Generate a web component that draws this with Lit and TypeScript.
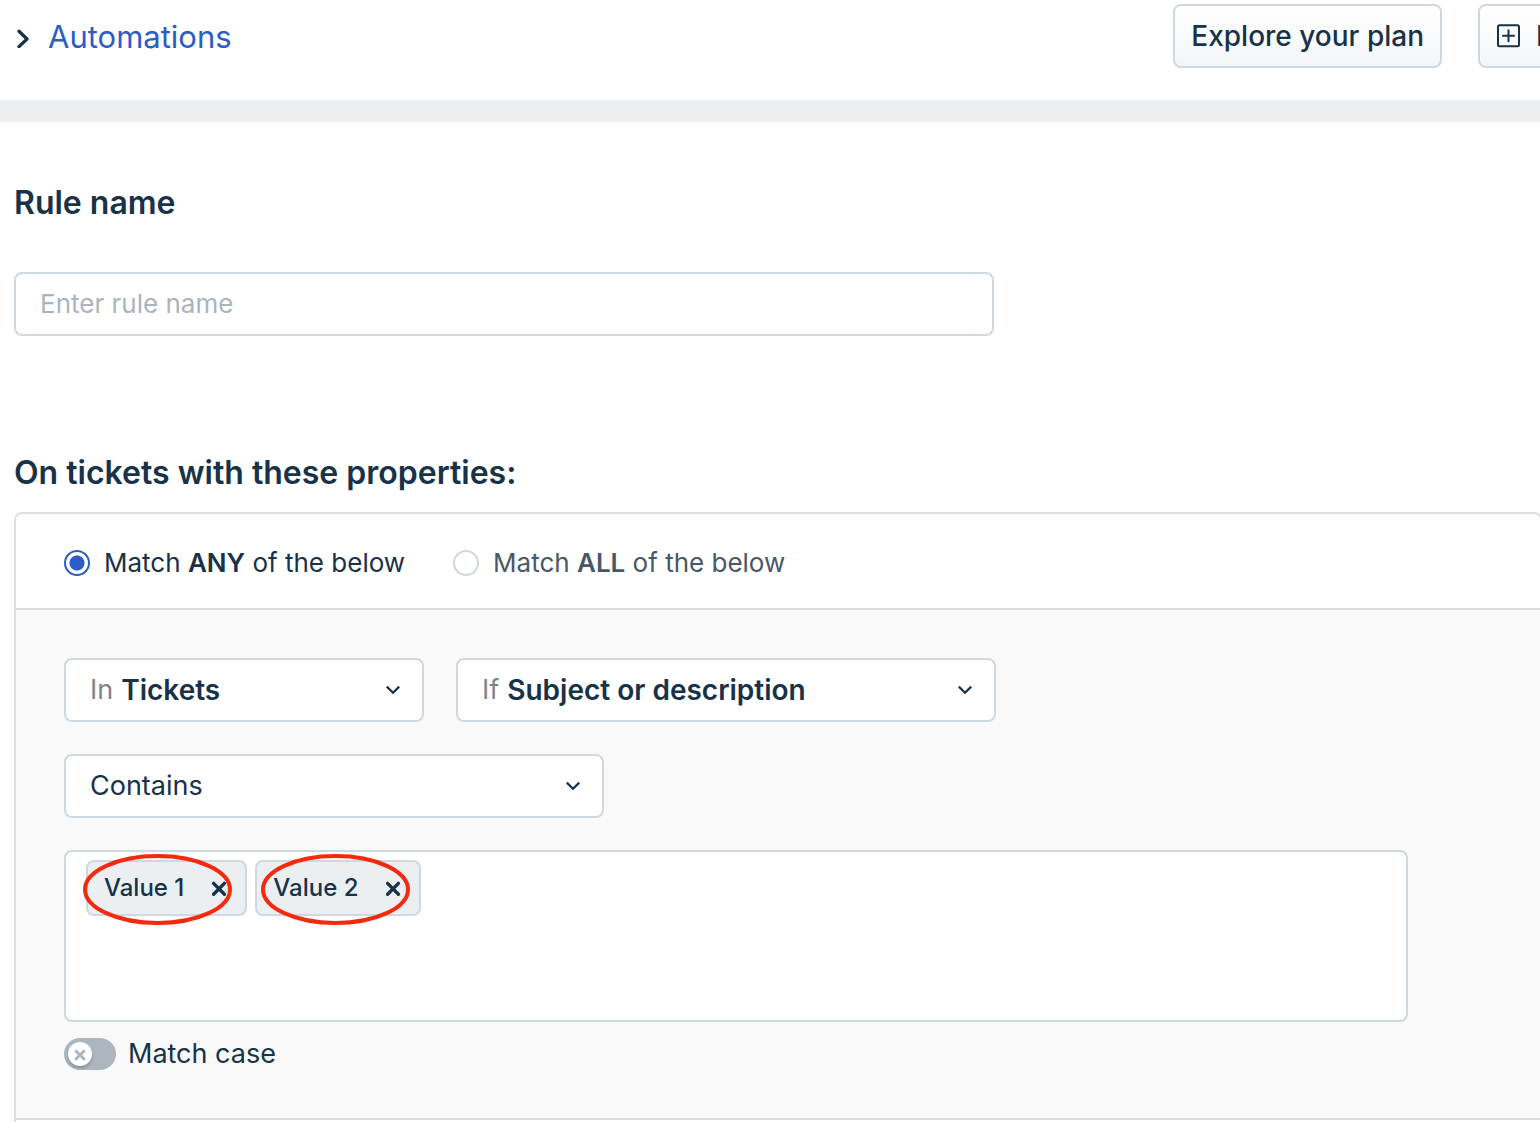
import { LitElement, html, css, svg } from "lit";
import { customElement, property, state } from "lit/decorators.js";

@customElement("rule-select")
class RuleSelect extends LitElement {
  static styles = css`
    :host {
      display: block;
      min-width: 0;
    }
    .field {
      display: grid;
      grid-template-columns: auto 1fr auto;
      align-items: center;
      box-sizing: border-box;
      height: 64px;
      padding: 0 20px 0 24px;
      border: 2px solid #cfd7df;
      border-radius: 8px;
      background: #fff;
      color: #183247;
    }
    .prefix {
      grid-area: 1 / 1;
      padding-right: 8px;
      color: #7b858e;
    }
    .select {
      grid-area: 1 / 2 / 2 / 4;
      appearance: none;
      width: 100%;
      height: 60px;
      margin: 0;
      padding: 0;
      border: 0;
      outline: 0;
      background: none;
      color: inherit;
      font: inherit;
    }
    .strong {
      font-size: 28px;
      font-weight: 600;
    }
    .chevron {
      grid-area: 1 / 3;
      width: 18px;
      height: 18px;
      pointer-events: none;
    }
  `;

  @property() prefixText = "";
  @property() label = "";
  @property() value = "";

  render() {
    return html`
      <div class="field">
        ${this.prefixText
          ? html`<label class="prefix" for="choice">${this.prefixText}</label>`
          : ""}
        <select
          id="choice"
          class="select ${this.prefixText ? "strong" : ""}"
          aria-label=${this.label}
        >
          <option>${this.value}</option>
        </select>
        <svg class="chevron" viewBox="0 0 18 18" fill="none" aria-hidden="true">
          <path d="M2.8 5.6 9 11.8 15.2 5.6" stroke="currentColor" stroke-width="2.2" />
        </svg>
      </div>
    `;
  }
}

@customElement("app-root")
class AppRoot extends LitElement {
  static styles = css`
    :host {
      display: block;
      overflow: hidden;
      min-height: 100vh;
      background: #fff;
      color: #183247;
      font-family: Inter, "Liberation Sans", sans-serif;
      font-size: 27px;
      line-height: 40px;
    }
    .header {
      display: flex;
      align-items: center;
      justify-content: space-between;
      padding: 4px 0 32px 14px;
      border-bottom: 22px solid #ebeff2;
    }
    .crumbs {
      display: flex;
      align-items: center;
      gap: 16px;
    }
    .crumb-icon {
      width: 18px;
      height: 24px;
    }
    .crumb-link {
      padding-top: 2px;
      color: #2c5cc5;
      font-size: 31px;
      text-decoration: none;
    }
    .actions {
      display: flex;
      gap: 36px;
      margin-right: -64px;
    }
    .button {
      display: flex;
      align-items: center;
      flex: none;
      gap: 16px;
      box-sizing: border-box;
      height: 64px;
      padding: 0 16px;
      border: 2px solid #cfd7df;
      border-radius: 8px;
      background: linear-gradient(#fff, #f3f5f7);
      color: inherit;
      font: inherit;
      font-size: 28px;
      font-weight: 500;
      white-space: nowrap;
    }
    .wide {
      width: 126px;
    }
    .plus {
      flex: none;
      width: 24px;
      height: 24px;
    }
    .content {
      padding: 61px 0 0 14px;
    }
    .title {
      display: block;
      margin: 0;
      font-size: 32px;
      font-weight: 600;
      line-height: 40px;
    }
    .name {
      display: block;
      box-sizing: border-box;
      width: 100%;
      max-width: 980px;
      height: 64px;
      margin: 49px 0 117px;
      padding: 0 24px 2px;
      border: 2px solid #cfd7df;
      border-radius: 8px;
      outline: 0;
      color: inherit;
      font: inherit;
      font-size: 26px;
    }
    .name::placeholder {
      color: #aab4bd;
      opacity: 1;
    }
    .panel {
      margin: 19px -2px 0 0;
      border: 2px solid #dcdfe2;
      border-radius: 8px;
      background: #fff;
    }
    .match {
      display: flex;
      gap: 48px;
      margin: 0;
      padding: 29px 48px 25px;
      border: 0;
      border-bottom: 2px solid #dcdfe2;
      font-size: 26px;
    }
    .option {
      display: flex;
      align-items: center;
      gap: 14px;
      color: #475867;
    }
    .option.on {
      color: #183247;
    }
    .text {
      white-space: nowrap;
    }
    .bold {
      font-weight: 600;
    }
    .radio {
      appearance: none;
      flex: none;
      box-sizing: border-box;
      width: 26px;
      height: 26px;
      margin: 0;
      border: 2px solid #cfd7df;
      border-radius: 50%;
      background: #fff;
    }
    .radio:checked {
      border-color: #2c5cc5;
      background: radial-gradient(circle, #2c5cc5 7px, #fff 8px);
    }
    .body {
      display: flex;
      flex-direction: column;
      gap: 32px;
      padding: 48px 132px 48px 48px;
      border-bottom: 2px solid #dcdfe2;
      background: #f9f9f9;
    }
    .row {
      display: flex;
      gap: 32px;
    }
    .short {
      flex: 0 1 360px;
    }
    .long {
      flex: 0 1 540px;
    }
    .values {
      display: flex;
      flex-direction: column;
      gap: 16px;
    }
    .tags {
      position: relative;
      display: flex;
      align-items: flex-start;
      gap: 8px;
      box-sizing: border-box;
      min-height: 172px;
      padding: 8px 20px;
      border: 2px solid #cfd7df;
      border-radius: 8px;
      background: #fff;
    }
    .tag {
      display: flex;
      align-items: center;
      gap: 25px;
      box-sizing: border-box;
      height: 56px;
      padding: 0 16px;
      border: 2px solid #cfd7df;
      border-radius: 8px;
      background: #ebeff2;
      font-size: 24px;
      font-weight: 500;
      white-space: nowrap;
    }
    .remove {
      display: flex;
      padding: 0;
      border: 0;
      background: none;
      color: inherit;
    }
    .cross {
      width: 20px;
      height: 20px;
    }
    .rings {
      position: absolute;
      top: 0;
      left: 0;
      width: 360px;
      height: 80px;
      pointer-events: none;
    }
    .case {
      display: flex;
      align-items: center;
      gap: 12px;
      align-self: flex-start;
      height: 32px;
    }
    .switch {
      display: grid;
      align-items: center;
    }
    .toggle {
      grid-area: 1 / 1;
      appearance: none;
      width: 52px;
      height: 32px;
      margin: 0;
      border-radius: 16px;
      background: #acb6be;
    }
    .knob {
      grid-area: 1 / 1;
      display: flex;
      align-items: center;
      justify-content: center;
      width: 24px;
      height: 24px;
      margin-left: 4px;
      border-radius: 50%;
      background: #fff;
      box-shadow: 0 2px 3px rgba(24, 50, 71, 0.3);
      color: #acb6be;
      pointer-events: none;
    }
    .toggle:checked + .knob {
      margin-left: 24px;
    }
    .knob-icon {
      width: 24px;
      height: 24px;
    }
    .next {
      height: 48px;
    }
  `;

  @state() private tags = ["Value 1", "Value 2"];
  @state() private match = "ANY";

  private option(word: string) {
    const on = this.match === word;
    return html`
      <label class="option ${on ? "on" : ""}">
        <input
          class="radio"
          type="radio"
          name="match"
          .checked=${on}
          @change=${() => (this.match = word)}
        />
        <span class="text">Match <b class="bold">${word}</b> of the below</span>
      </label>
    `;
  }

  private tag(name: string) {
    return html`
      <span class="tag">
        ${name}
        <button
          class="remove"
          type="button"
          aria-label="Remove ${name}"
          @click=${() => (this.tags = this.tags.filter((t) => t !== name))}
        >
          <svg class="cross" viewBox="0 0 20 20" fill="none">
            <path
              d="M4.6 5.4 15.4 16.2M15.4 5.4 4.6 16.2"
              stroke="currentColor"
              stroke-width="3.4"
              stroke-linecap="round"
            />
          </svg>
        </button>
      </span>
    `;
  }

  render() {
    return html`
      <header class="header">
        <nav class="crumbs">
          <svg class="crumb-icon" viewBox="0 0 18 24" fill="none" aria-hidden="true">
            <path
              d="M5 7.2 13 15 5 22.6"
              stroke="currentColor"
              stroke-width="3.3"
              stroke-linecap="round"
              stroke-linejoin="round"
            />
          </svg>
          <a class="crumb-link" href="#automations">Automations</a>
        </nav>
        <div class="actions">
          <button class="button" type="button">Explore your plan</button>
          <button class="button wide" type="button">
            <svg class="plus" viewBox="0 0 24 24" fill="none" aria-hidden="true">
              <rect x="2" y="1.2" width="21" height="21" rx="1.5" stroke="currentColor" stroke-width="2" />
              <path d="M12.5 6.2V17.2M7 11.7H18" stroke="currentColor" stroke-width="2" stroke-linecap="round" />
            </svg>
            New
          </button>
        </div>
      </header>
      <main class="content">
        <label class="title" for="rule-name">Rule name</label>
        <input id="rule-name" class="name" type="text" placeholder="Enter rule name" />
        <h2 class="title">On tickets with these properties:</h2>
        <section class="panel">
          <fieldset class="match">${this.option("ANY")}${this.option("ALL")}</fieldset>
          <div class="body">
            <div class="row">
              <rule-select class="short" prefixText="In" label="In" value="Tickets"></rule-select>
              <rule-select
                class="long"
                prefixText="If"
                label="If"
                value="Subject or description"
              ></rule-select>
            </div>
            <div class="row">
              <rule-select class="long" label="Operator" value="Contains"></rule-select>
            </div>
            <div class="values">
              <div class="tags">
                ${this.tags.map((t) => this.tag(t))}
                <svg class="rings" viewBox="0 0 360 80" fill="none" aria-hidden="true">
                  ${this.tags.map(
                    (_, i) => svg`<ellipse cx=${91.5 + i * 178} cy="37.5" rx="72.5" ry="33.5"
                      stroke="#f42a0e" stroke-width="4" />`
                  )}
                </svg>
              </div>
              <label class="case">
                <span class="switch">
                  <input class="toggle" type="checkbox" role="switch" />
                  <span class="knob">
                    <svg class="knob-icon" viewBox="0 0 24 24" fill="none" aria-hidden="true">
                      <path d="M7.2 8.2 16.8 17.8M16.8 8.2 7.2 17.8" stroke="currentColor" stroke-width="3" />
                    </svg>
                  </span>
                </span>
                <span class="text">Match case</span>
              </label>
            </div>
          </div>
          <div class="next"></div>
        </section>
      </main>
    `;
  }
}
